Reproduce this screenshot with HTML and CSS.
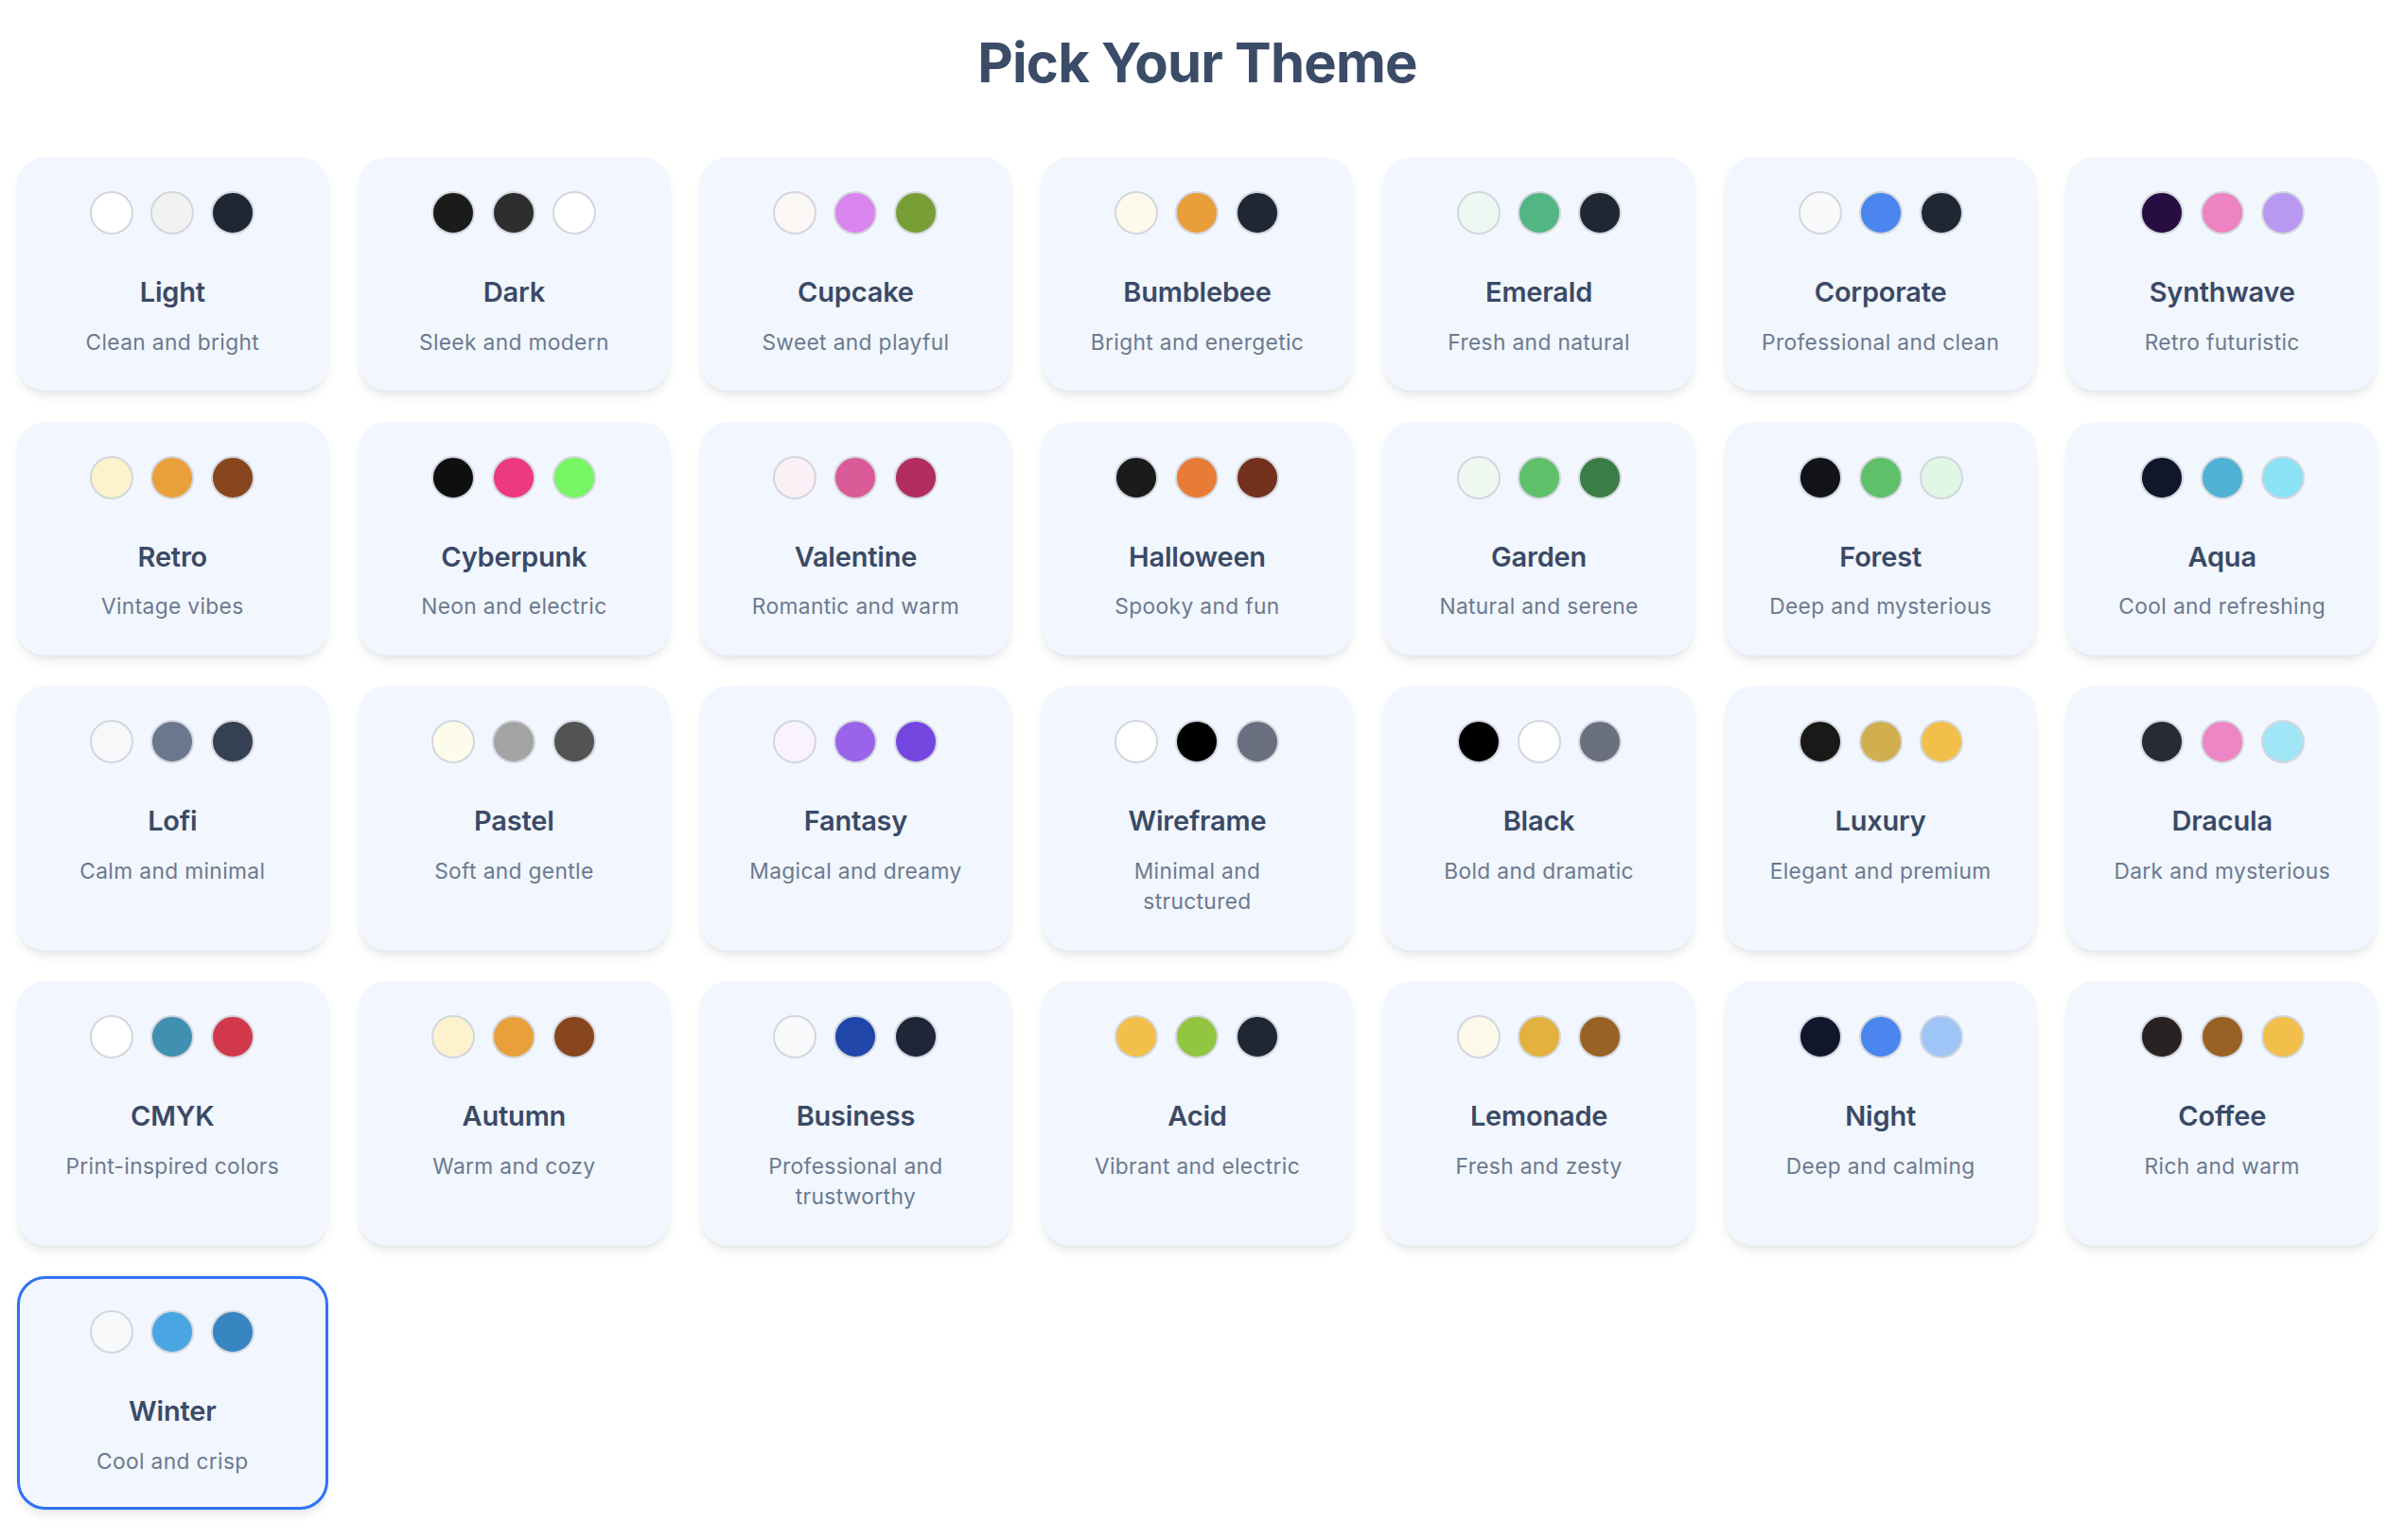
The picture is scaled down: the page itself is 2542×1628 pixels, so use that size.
FILE: index.html
```html
<!DOCTYPE html>
<html lang="en">
<head>
<meta charset="utf-8">
<title>Pick Your Theme</title>
<link rel="stylesheet" href="styles.css">
</head>
<body>
<main class="page">
  <h1 class="page-title">Pick Your Theme</h1>
  <div class="theme-grid">
    <div class="card"><div class="swatches"><span class="dot" style="background:#ffffff"></span><span class="dot" style="background:#f2f2f3"></span><span class="dot" style="background:#1f2735"></span></div><h2 class="name">Light</h2><p class="desc">Clean and bright</p></div>
    <div class="card"><div class="swatches"><span class="dot" style="background:#1b1b1b"></span><span class="dot" style="background:#2e2e2e"></span><span class="dot" style="background:#ffffff"></span></div><h2 class="name">Dark</h2><p class="desc">Sleek and modern</p></div>
    <div class="card"><div class="swatches"><span class="dot" style="background:#faf7f5"></span><span class="dot" style="background:#da84f0"></span><span class="dot" style="background:#789f35"></span></div><h2 class="name">Cupcake</h2><p class="desc">Sweet and playful</p></div>
    <div class="card"><div class="swatches"><span class="dot" style="background:#fefaeb"></span><span class="dot" style="background:#e89f3a"></span><span class="dot" style="background:#1f2634"></span></div><h2 class="name">Bumblebee</h2><p class="desc">Bright and energetic</p></div>
    <div class="card"><div class="swatches"><span class="dot" style="background:#ecf9f2"></span><span class="dot" style="background:#53b584"></span><span class="dot" style="background:#1f2634"></span></div><h2 class="name">Emerald</h2><p class="desc">Fresh and natural</p></div>
    <div class="card"><div class="swatches"><span class="dot" style="background:#f9fafb"></span><span class="dot" style="background:#4a86ee"></span><span class="dot" style="background:#1f2735"></span></div><h2 class="name">Corporate</h2><p class="desc">Professional and clean</p></div>
    <div class="card"><div class="swatches"><span class="dot" style="background:#280d42"></span><span class="dot" style="background:#ed84c1"></span><span class="dot" style="background:#b898f0"></span></div><h2 class="name">Synthwave</h2><p class="desc">Retro futuristic</p></div>

    <div class="card"><div class="swatches"><span class="dot" style="background:#fcf2cb"></span><span class="dot" style="background:#eaa03a"></span><span class="dot" style="background:#87461d"></span></div><h2 class="name">Retro</h2><p class="desc">Vintage vibes</p></div>
    <div class="card"><div class="swatches"><span class="dot" style="background:#0f0f0f"></span><span class="dot" style="background:#ec3981"></span><span class="dot" style="background:#76f662"></span></div><h2 class="name">Cyberpunk</h2><p class="desc">Neon and electric</p></div>
    <div class="card"><div class="swatches"><span class="dot" style="background:#fbf0f5"></span><span class="dot" style="background:#db5a98"></span><span class="dot" style="background:#b02d5e"></span></div><h2 class="name">Valentine</h2><p class="desc">Romantic and warm</p></div>
    <div class="card"><div class="swatches"><span class="dot" style="background:#1b1b1b"></span><span class="dot" style="background:#e87b36"></span><span class="dot" style="background:#72301d"></span></div><h2 class="name">Halloween</h2><p class="desc">Spooky and fun</p></div>
    <div class="card"><div class="swatches"><span class="dot" style="background:#eff9f2"></span><span class="dot" style="background:#5fc06a"></span><span class="dot" style="background:#3b7d46"></span></div><h2 class="name">Garden</h2><p class="desc">Natural and serene</p></div>
    <div class="card"><div class="swatches"><span class="dot" style="background:#111318"></span><span class="dot" style="background:#5fc06a"></span><span class="dot" style="background:#e0f7e6"></span></div><h2 class="name">Forest</h2><p class="desc">Deep and mysterious</p></div>
    <div class="card"><div class="swatches"><span class="dot" style="background:#10172b"></span><span class="dot" style="background:#4fb1d3"></span><span class="dot" style="background:#8ce2f5"></span></div><h2 class="name">Aqua</h2><p class="desc">Cool and refreshing</p></div>

    <div class="card"><div class="swatches"><span class="dot" style="background:#f7f8fa"></span><span class="dot" style="background:#6b778d"></span><span class="dot" style="background:#354052"></span></div><h2 class="name">Lofi</h2><p class="desc">Calm and minimal</p></div>
    <div class="card"><div class="swatches"><span class="dot" style="background:#fdfbea"></span><span class="dot" style="background:#a4a4a4"></span><span class="dot" style="background:#535353"></span></div><h2 class="name">Pastel</h2><p class="desc">Soft and gentle</p></div>
    <div class="card"><div class="swatches"><span class="dot" style="background:#f8f3fc"></span><span class="dot" style="background:#9b62ea"></span><span class="dot" style="background:#7446e0"></span></div><h2 class="name">Fantasy</h2><p class="desc">Magical and dreamy</p></div>
    <div class="card"><div class="swatches"><span class="dot" style="background:#ffffff"></span><span class="dot" style="background:#000000"></span><span class="dot" style="background:#6b7080"></span></div><h2 class="name">Wireframe</h2><p class="desc">Minimal and<br>structured</p></div>
    <div class="card"><div class="swatches"><span class="dot" style="background:#000000"></span><span class="dot" style="background:#ffffff"></span><span class="dot" style="background:#6b7080"></span></div><h2 class="name">Black</h2><p class="desc">Bold and dramatic</p></div>
    <div class="card"><div class="swatches"><span class="dot" style="background:#1a1918"></span><span class="dot" style="background:#d1ae4e"></span><span class="dot" style="background:#f2bf4a"></span></div><h2 class="name">Luxury</h2><p class="desc">Elegant and premium</p></div>
    <div class="card"><div class="swatches"><span class="dot" style="background:#282a36"></span><span class="dot" style="background:#ee85c4"></span><span class="dot" style="background:#a1e6f7"></span></div><h2 class="name">Dracula</h2><p class="desc">Dark and mysterious</p></div>

    <div class="card"><div class="swatches"><span class="dot" style="background:#ffffff"></span><span class="dot" style="background:#3f90b1"></span><span class="dot" style="background:#d2384c"></span></div><h2 class="name">CMYK</h2><p class="desc">Print-inspired colors</p></div>
    <div class="card"><div class="swatches"><span class="dot" style="background:#fcf2cd"></span><span class="dot" style="background:#eaa03a"></span><span class="dot" style="background:#87461d"></span></div><h2 class="name">Autumn</h2><p class="desc">Warm and cozy</p></div>
    <div class="card"><div class="swatches"><span class="dot" style="background:#f8f9fa"></span><span class="dot" style="background:#2046aa"></span><span class="dot" style="background:#1f2638"></span></div><h2 class="name">Business</h2><p class="desc">Professional and<br>trustworthy</p></div>
    <div class="card"><div class="swatches"><span class="dot" style="background:#f3bf4b"></span><span class="dot" style="background:#93c640"></span><span class="dot" style="background:#1f2634"></span></div><h2 class="name">Acid</h2><p class="desc">Vibrant and electric</p></div>
    <div class="card"><div class="swatches"><span class="dot" style="background:#fdf9ea"></span><span class="dot" style="background:#e2b13e"></span><span class="dot" style="background:#986224"></span></div><h2 class="name">Lemonade</h2><p class="desc">Fresh and zesty</p></div>
    <div class="card"><div class="swatches"><span class="dot" style="background:#10172b"></span><span class="dot" style="background:#4a86ee"></span><span class="dot" style="background:#9fc5f7"></span></div><h2 class="name">Night</h2><p class="desc">Deep and calming</p></div>
    <div class="card"><div class="swatches"><span class="dot" style="background:#282322"></span><span class="dot" style="background:#986224"></span><span class="dot" style="background:#f2bf4a"></span></div><h2 class="name">Coffee</h2><p class="desc">Rich and warm</p></div>

    <div class="card card-selected"><div class="swatches"><span class="dot" style="background:#f7f9fb"></span><span class="dot" style="background:#49a6e3"></span><span class="dot" style="background:#3785c1"></span></div><h2 class="name">Winter</h2><p class="desc">Cool and crisp</p></div>
  </div>
</main>
</body>
</html>
```
FILE: styles.css
```css
* {
  box-sizing: border-box;
}

html, body {
  margin: 0;
  padding: 0;
  background: #ffffff;
}

body {
  font-family: Inter, "Noto Sans", "Liberation Sans", sans-serif;
  color: #334155;
}

.page {
  padding: 34px 29px 30px 18px;
}

.page-title {
  margin: 0 0 67px;
  text-align: center;
  font-size: 58px;
  line-height: 65px;
  font-weight: 700;
  color: #3b4c68;
  letter-spacing: -0.8px;
}

.theme-grid {
  display: grid;
  grid-template-columns: repeat(7, 1fr);
  gap: 32.5px;
  align-items: stretch;
}

.card {
  background: #f2f6fe;
  border: 3px solid transparent;
  border-radius: 30px;
  padding: 33px 10px 32px;
  text-align: center;
  box-shadow: 0 7px 11px -2px rgba(15, 23, 42, 0.09), 0 3px 6px -3px rgba(15, 23, 42, 0.07);
}

.card-selected {
  border-color: #2f72f3;
}

.swatches {
  display: flex;
  justify-content: center;
  gap: 18px;
  margin-bottom: 38px;
}

.dot {
  width: 46px;
  height: 46px;
  border-radius: 50%;
  border: 2.5px solid #d3d6dd;
  display: block;
}

.name {
  margin: 0 0 14px;
  font-size: 29px;
  line-height: 45.5px;
  font-weight: 600;
  color: #3a4a66;
  letter-spacing: -0.2px;
}

.desc {
  margin: 0;
  font-size: 22.75px;
  line-height: 32.5px;
  font-weight: 400;
  color: #6b7a90;
  letter-spacing: 0.35px;
}
```
